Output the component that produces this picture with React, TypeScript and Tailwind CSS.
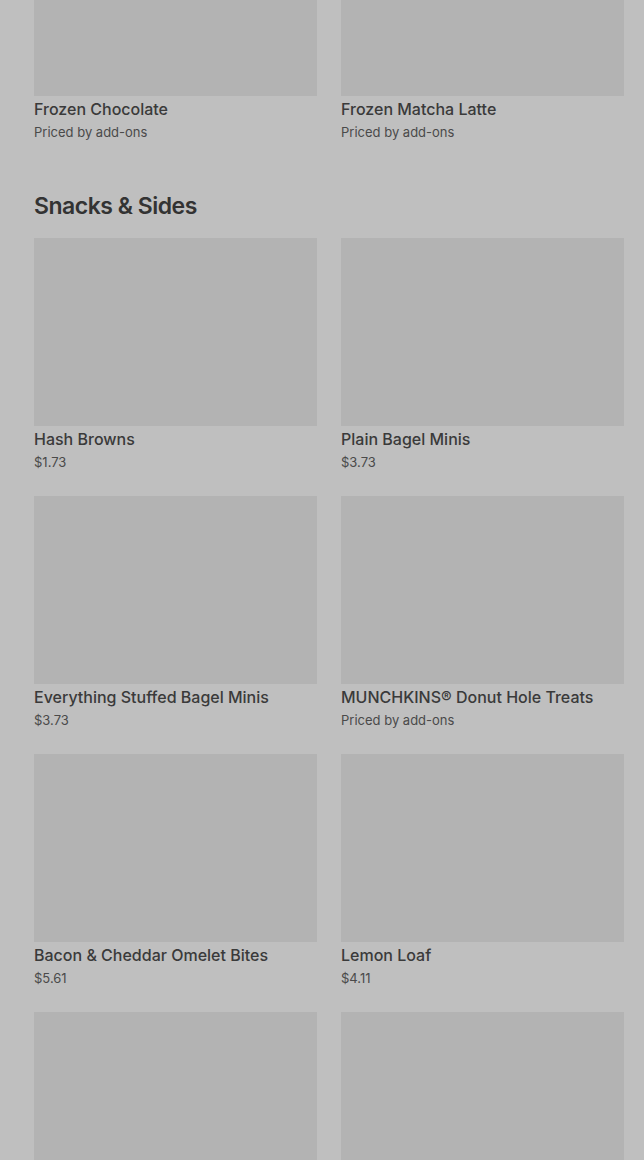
import React from "react";

interface Item {
    name: string;
    price: string;
}

const frozen: Item[] = [
    { name: "Frozen Chocolate", price: "Priced by add-ons" },
    { name: "Frozen Matcha Latte", price: "Priced by add-ons" },
];

const snacks: Item[] = [
    { name: "Hash Browns", price: "$1.73" },
    { name: "Plain Bagel Minis", price: "$3.73" },
    { name: "Everything Stuffed Bagel Minis", price: "$3.73" },
    { name: "MUNCHKINS® Donut Hole Treats", price: "Priced by add-ons" },
    { name: "Bacon & Cheddar Omelet Bites", price: "$5.61" },
    { name: "Lemon Loaf", price: "$4.11" },
];

const ItemCard: React.FC<{ item?: Item }> = ({ item }) => (
    <div className="flex flex-col">
        <div className="h-[188px] w-full bg-[#b3b3b3]" />
        {item && (
            <>
                <div className="mt-[3px] truncate text-[16px] font-medium leading-5 text-[#3a3a3a]">
                    {item.name}
                </div>
                <div className="mt-[3px] text-[13px] leading-5 text-[#4a4a4a]">{item.price}</div>
            </>
        )}
    </div>
);

export default function App() {
    return (
        <div
            className="h-[1160px] overflow-hidden bg-[#bfbfbf] pl-[34px] pr-[20px]"
            style={{ fontFamily: "Inter, 'Noto Sans', sans-serif" }}
        >
            <div className="-mt-[92px] grid grid-cols-2 gap-x-6 gap-y-6">
                {frozen.map((item) => (
                    <ItemCard key={item.name} item={item} />
                ))}
            </div>

            <h2 className="mt-[48px] mb-[16px] text-[23px] font-semibold leading-8 tracking-[-0.5px] text-[#333333]">
                Snacks &amp; Sides
            </h2>

            <div className="grid grid-cols-2 gap-x-6 gap-y-6">
                {snacks.map((item) => (
                    <ItemCard key={item.name} item={item} />
                ))}
                {/* next row is only partly in view */}
                <ItemCard />
                <ItemCard />
            </div>
        </div>
    );
}
